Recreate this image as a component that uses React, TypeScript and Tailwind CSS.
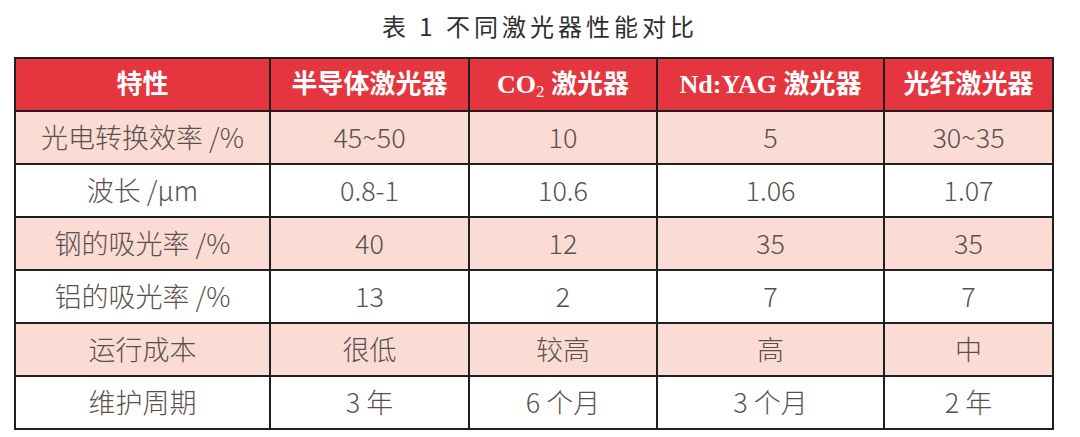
const headers = ["特性", "半导体激光器", "CO2", "Nd:YAG 激光器", "光纤激光器"];

const rows: string[][] = [
  ["光电转换效率 /%", "45~50", "10", "5", "30~35"],
  ["波长 /μm", "0.8-1", "10.6", "1.06", "1.07"],
  ["钢的吸光率 /%", "40", "12", "35", "35"],
  ["铝的吸光率 /%", "13", "2", "7", "7"],
  ["运行成本", "很低", "较高", "高", "中"],
  ["维护周期", "3 年", "6 个月", "3 个月", "2 年"],
];

const widths = ["w-[255px]", "w-[199px]", "w-[188px]", "w-[227px]", "w-[169px]"];

export default function App() {
  return (
    <div className="w-[1080px] h-[437px] bg-white overflow-hidden">
      <h1 className="pt-[9px] h-[57px] text-center text-[24px] leading-[34px] tracking-[4px] text-[#2e2e2e] font-normal font-['Noto_Sans_CJK_SC',sans-serif]">
        表 1 不同激光器性能对比
      </h1>
      <table className="ml-[14px] w-[1038px] table-fixed border-collapse border-2 border-[#1f1f1f]">
        <thead>
          <tr className="h-[53px] bg-[#e5353f]">
            {headers.map((h, i) => (
              <th
                key={i}
                className={`${widths[i]} border-2 border-[#1f1f1f] p-0 text-center text-[26px] font-bold text-white font-['Liberation_Serif','Noto_Sans_CJK_SC',serif]`}
              >
                {h === "CO2" ? (
                  <span>
                    CO<sub className="text-[17px] font-normal">2</sub> 激光器
                  </span>
                ) : (
                  h
                )}
              </th>
            ))}
          </tr>
        </thead>
        <tbody>
          {rows.map((r, ri) => (
            <tr key={ri} className={`h-[53px] ${ri % 2 === 0 ? "bg-[#fadcd5]" : "bg-white"}`}>
              {r.map((c, ci) => (
                <td
                  key={ci}
                  className="border-2 border-[#1f1f1f] p-0 text-center text-[27px] font-light text-[#5a4f4e] font-['Noto_Sans_CJK_SC',sans-serif]"
                >
                  {c}
                </td>
              ))}
            </tr>
          ))}
        </tbody>
      </table>
    </div>
  );
}
